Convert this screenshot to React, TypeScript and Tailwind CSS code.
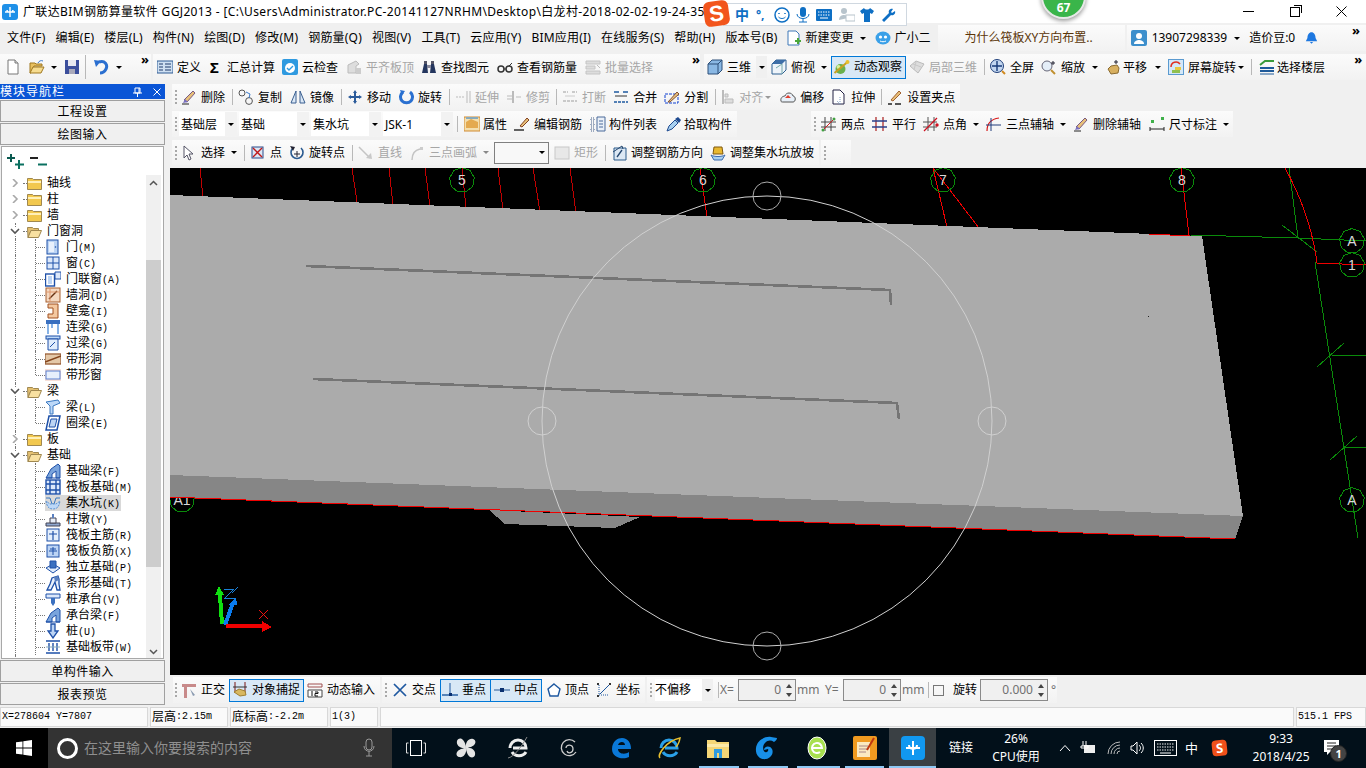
import React from "react";

const S = ({ children, w = 16, h = 16, vb = "0 0 16 16" }: { children: React.ReactNode; w?: number; h?: number; vb?: string }) => (
  <svg width={w} height={h} viewBox={vb} className="shrink-0">{children}</svg>
);

const ic: Record<string, React.ReactNode> = {
  page: <S><path d="M3 1h7l3 3v11H3z" fill="#fff" stroke="#777" /><path d="M10 1v3h3" fill="#ddd" stroke="#777" /></S>,
  open: <S><path d="M1 4h5l1 1h6v2H5L2 14H1z" fill="#e8c060" stroke="#a07820" /><path d="M4 8h11l-3 6H1z" fill="#f6dc90" stroke="#a07820" /><path d="M9 4c1-2 3-3 5-2" fill="none" stroke="#3a78c8" /></S>,
  save: <S><path d="M1 1h14v14H1z" fill="#3c4f9c" /><path d="M4 1h8v6H4z" fill="#e8e8f0" /><path d="M5 10h6v5H5z" fill="#aab" /></S>,
  undo: <S><path d="M6 3c6-2 9 3 7 7s-5 4-6 4" fill="none" stroke="#2a6fd0" strokeWidth="3" /><path d="M1 1l7 1-5 6z" fill="#2a6fd0" /></S>,
  def: <S><path d="M0 2h16v12H0z" fill="#cfe0f2" stroke="#2c5a94" /><path d="M2 5h4M2 8h4M2 11h4M8 5h6M8 8h6M8 11h6" stroke="#1e3a6a" /></S>,
  cloud: <S><rect width="16" height="16" rx="2" fill="#2f9ae0" /><circle cx="8" cy="9" r="5" fill="#fff" /><path d="M5 9l2 2 4-4" stroke="#2f9ae0" strokeWidth="1.4" fill="none" /></S>,
  flat: <S><path d="M2 6l8-4 3 3-3 2v7H2z" fill="#ddd" stroke="#bbb" /><path d="M10 9h5v6h-5z" fill="#ccc" /></S>,
  binoc: <S><path d="M1 14l2-9h3l1 9zM9 14l1-9h3l2 9z" fill="#24365e" /><path d="M3 2h3v3H3zM10 2h3v3h-3z" fill="#556" /><path d="M6 6h4v3H6z" fill="#889" /></S>,
  glasses: <S><circle cx="4" cy="10" r="3" fill="none" stroke="#333" strokeWidth="1.5" /><circle cx="12" cy="10" r="3" fill="none" stroke="#333" strokeWidth="1.5" /><path d="M7 10h2M12 7l3-3" stroke="#333" /></S>,
  batch: <S><path d="M1 2h14v3H1zM1 7h9v3H1zM1 12h14v3H1z" fill="#ddd" stroke="#c4c4c4" /><path d="M12 6l3 3" stroke="#bbb" /></S>,
  cube: <S><path d="M1 5l4-4h10v10l-4 4H1z" fill="#8ab8e4" stroke="#2c4f78" /><path d="M1 5h10v10M11 5l4-4" fill="none" stroke="#2c4f78" /></S>,
  top: <S><path d="M1 5l4-4h10v10l-4 4H1z" fill="#eef4fa" stroke="#2c5f90" /><path d="M1 5l4-4h10l-4 4z" fill="#3e6fa8" /><path d="M11 5v10M5 9l6-4" fill="none" stroke="#7aa" /></S>,
  orbit: <S w={17}><circle cx="7" cy="10" r="5" fill="#6ab04c" /><circle cx="5" cy="8" r="2" fill="#d6ee9c" /><path d="M1 14L14 3" stroke="#c8a020" strokeWidth="2" /><circle cx="14" cy="3" r="2" fill="#e8c030" /></S>,
  local: <S><path d="M1 7l6-5 8 3-6 9z" fill="#ddd" stroke="#bbb" /><path d="M4 5l8 3M7 3l-2 8" stroke="#c8c8c8" /></S>,
  full: <S><circle cx="7" cy="7" r="6.5" fill="#c2d6f0" stroke="#1f3f7a" /><path d="M7 2v10M2 7h10" stroke="#173a78" strokeWidth="1.4" /><path d="M12 12l3 3" stroke="#d08a20" strokeWidth="2" /></S>,
  zoom: <S><circle cx="6" cy="7" r="5" fill="#e4eef8" stroke="#667" /><path d="M10 11l4 4" stroke="#c09030" strokeWidth="2" /><path d="M12 2v4M10 4h4" stroke="#223" /></S>,
  pan: <S><path d="M3 10l3-3 6-1 2 3-1 5-7 1z" fill="#d8b060" stroke="#8a6a30" /><path d="M11 1v4M9 3h4" stroke="#223" /></S>,
  rot: <S><rect x=".5" y=".5" width="15" height="15" fill="#d4e8f8" stroke="#5a9ad0" /><path d="M3 8a5 5 0 0 1 9-3" fill="none" stroke="#e03020" strokeWidth="1.5" /><path d="M4 11h8v3H4z" fill="#90c050" /><path d="M7 8h6v3H7z" fill="#e8c840" /></S>,
  floors: <S><path d="M1 6l5-4h9" fill="none" stroke="#3a9a3a" strokeWidth="2" /><path d="M1 9h14M1 12h14" stroke="#1e5a9a" strokeWidth="2" /><path d="M1 15h14" stroke="#1e5a9a" strokeWidth="1" /></S>,
  newchg: <S><path d="M2 1h8l3 3v11H2z" fill="#fff" stroke="#3f78b8" /><path d="M9 10h2V8h2v2h2v2h-2v2h-2v-2H9z" fill="#4aa83a" /></S>,
  bot: <S><ellipse cx="8" cy="8" rx="7.5" ry="6.5" fill="#3aa0e8" /><circle cx="5.5" cy="7" r="1.6" fill="#fff" /><circle cx="10.5" cy="7" r="1.6" fill="#fff" /><path d="M5 11c2 1 4 1 6 0" stroke="#fff" fill="none" /></S>,
  user: <S><rect width="16" height="16" rx="2" fill="#3d8fcc" /><circle cx="8" cy="6" r="3" fill="#fff" /><path d="M3 14c0-3 3-4 5-4s5 1 5 4z" fill="#fff" /></S>,
  bell: <S w={13}><path d="M8 1c3 0 5 3 5 7l2 4H1l2-4c0-4 2-7 5-7z" fill="#1e78e0" /><path d="M6 13h4l-2 2z" fill="#1e78e0" /></S>,
  brush: <S><path d="M1 15h7" stroke="#222" /><path d="M3 11L12 2l2 2-8 9z" fill="#e8c078" stroke="#7a5a80" /><path d="M2 14l2-4 3 3z" fill="#7a70c0" /></S>,
  copy: <S><circle cx="4" cy="4" r="3" fill="none" stroke="#555" /><circle cx="11" cy="12" r="3.4" fill="none" stroke="#555" /><path d="M8 3l4 2-1 4" fill="none" stroke="#3a78c8" /></S>,
  mirror: <S><path d="M6 2L1 14h5zM10 2l5 12h-5z" fill="#dbe8f6" stroke="#3a5f90" /></S>,
  move: <S><path d="M8 1l2 3H9v3h3V6l3 2-3 2V9H9v3h1l-2 3-2-3h1V9H4v1L1 8l3-2v1h3V4H6z" fill="#2a5a9a" /></S>,
  rotate: <S><path d="M5 3a6 6 0 1 0 7 0" fill="none" stroke="#2a70d0" strokeWidth="3" /><path d="M2 1l5 1-3 4z" fill="#2a70d0" /></S>,
  extend: <S><path d="M1 8h9" stroke="#bbb" strokeDasharray="2 1" /><path d="M12 2v12M15 2v12" stroke="#bbb" /></S>,
  trim: <S><path d="M7 2v12" stroke="#bbb" strokeWidth="2" /><path d="M1 7h5M1 10h5M10 8h5" stroke="#bbb" /></S>,
  brk: <S><path d="M1 3h5M10 3h5M1 12h14" stroke="#bbb" strokeWidth="1.5" strokeDasharray="3 1" /><path d="M3 7h10" stroke="#ccc" /></S>,
  merge: <S><path d="M1 3h5M10 3h5" stroke="#1e5aa0" strokeWidth="1.4" /><path d="M2 7h12" stroke="#333" /><path d="M1 13h14" stroke="#1e5aa0" strokeWidth="1.5" strokeDasharray="3 1" /></S>,
  split: <S><path d="M1 5h13v9H1z" fill="none" stroke="#1040d0" strokeDasharray="3 1" /><path d="M4 13l9-10 2 2-9 8z" fill="#e8c080" stroke="#805030" /></S>,
  align: <S w={13} vb="0 0 13 16"><path d="M2 1v14" stroke="#bbb" strokeWidth="2" /><path d="M4 5h3v3H4zM4 10h8v4H4z" fill="#ddd" stroke="#bbb" /></S>,
  offset: <S><path d="M1 12c-1-4 3-5 4-5 1-4 7-4 8 0 3 0 3 6 0 6H3c-1 0-2 0-2-1z" fill="#e8f0f8" stroke="#555" /><path d="M8 6l3 3H5z" fill="#e04030" /></S>,
  stretch: <S><path d="M2 1h7l4 4v10H2z" fill="#fff" stroke="#224" /><path d="M9 8v7M6 12l3 3" stroke="#7a9ac0" strokeDasharray="1 1" /></S>,
  grip: <S><path d="M1 15h4M8 15h6" stroke="#222" strokeWidth="1.5" /><path d="M4 11l8-9 2 2-8 8z" fill="#e8c078" stroke="#a06030" /></S>,
  attr: <S><path d="M0 1h16v14H0z" fill="#f4dfae" stroke="#d08a30" /><path d="M2 6l5-3 7 3v6H2z" fill="#e4aa50" /><path d="M2 1h12v2H2z" fill="#8ab" /></S>,
  edit: <S><path d="M0 14h10" stroke="#222" strokeWidth="1.4" /><path d="M6 10l7-8 2 2-7 7z" fill="#e8c078" stroke="#804020" /></S>,
  list: <S><path d="M1 2h3v3H1zM1 7h3v3H1zM1 12h3v3H1z" fill="none" stroke="#46608a" strokeDasharray="1 1" /><path d="M7 1h8v14H7z" fill="#eaf0f8" stroke="#4a6a9a" /><path d="M9 5h4M9 8h4M9 11h4" stroke="#4a6a9a" /></S>,
  pick: <S><path d="M1 15l2-5 6-6 3 3-6 6z" fill="#a8d0f0" stroke="#1e4a90" /><path d="M9 3l3-2 3 3-2 3z" fill="#1e4a90" /></S>,
  twopt: <S><path d="M4 1v14M10 1v14M0 6h15M0 11h15" stroke="#444" /><path d="M2 14L14 2" stroke="#d02020" /><circle cx="2" cy="14" r="1.5" fill="#40a040" /><circle cx="13" cy="3" r="1.5" fill="#40a040" /></S>,
  para: <S><path d="M4 1v14M11 1v14" stroke="#b03030" strokeWidth="1.3" /><path d="M0 5h15M0 11h15" stroke="#2a3f8a" strokeWidth="1.3" /></S>,
  angle: <S><path d="M5 1v14M11 1v14M0 6h14M0 11h14" stroke="#555" /><path d="M1 15L14 2" stroke="#d01020" strokeWidth="1.3" /><circle cx="14" cy="9" r="1.7" fill="#d01020" /></S>,
  arc3: <S><path d="M1 15c0-7 4-12 12-13" fill="none" stroke="#d81818" strokeWidth="1.2" /><path d="M5 2v13M0 9h15" stroke="#1e3a7a" /></S>,
  dim: <S><rect x="2" y="4" width="3" height="3" fill="#3fb04a" /><rect x="12" y="1" width="3" height="3" fill="#3fb04a" /><path d="M1 11v4M15 11v4M1 13h14" stroke="#222" /></S>,
  pointer: <S><path d="M3 1l9 8H8l2 5-2 1-2-5-3 3z" fill="#fff" stroke="#556" /></S>,
  pt: <S><rect x="2" y="2" width="11" height="11" fill="#dbe6f4" stroke="#2a4a8a" /><path d="M3 3l9 9M12 3l-9 9" stroke="#c01818" strokeWidth="1.4" /></S>,
  rotpt: <S><path d="M12 3a6 6 0 1 1-8 0" fill="none" stroke="#2a5a90" strokeWidth="1.6" /><path d="M1 1l5 1-2 4z" fill="#223" /><path d="M8 6v6M5 9h6" stroke="#223" /></S>,
  line: <S><path d="M1 2l11 11" stroke="#c4c4c4" strokeWidth="1.5" /><path d="M14 14l-6-1 5-5z" fill="#c8c8c8" /></S>,
  arc: <S><path d="M3 15c0-6 3-10 8-11" fill="none" stroke="#c4c4c4" strokeWidth="1.5" /><rect x="11" y="2" width="3" height="3" fill="#ccc" /></S>,
  rect: <S><rect x="1" y="2" width="14" height="12" fill="#e8e8e8" stroke="#c8c8c8" /></S>,
  adjr: <S><path d="M3 3h12v12H3z" fill="#dce8f4" stroke="#2a5a8a" /><path d="M2 7l9-6 1 3" fill="none" stroke="#24466e" /><path d="M6 12l5-7" stroke="#24466e" strokeWidth="1.3" /></S>,
  adjp: <S><path d="M4 2h8l1 7H3z" fill="#e8b830" stroke="#805a10" /><path d="M1 10c3 2 11 2 14 0l-3 5H4z" fill="#a8d0f0" stroke="#3a6ab0" /></S>,
  ortho: <S><path d="M1 2h14v3H1zM3 5h3v11H3z" fill="#c88a8a" /><path d="M9 7l5 6-2 1z" fill="#8a9ab0" /></S>,
  snap: <S><path d="M3 0v11M13 0v11" stroke="#8a3a3a" strokeWidth="1.2" /><path d="M1 5h14" stroke="#333" /><path d="M2 10l5-3 6 2 1 4-6 1z" fill="#d8b860" stroke="#a08030" /></S>,
  dyn: <S><path d="M1 2h14v3H1z" fill="none" stroke="#a05050" /><path d="M1 8h14v7H1z" fill="#fff" stroke="#444" /><path d="M5 9v5M8 10h3v1.5H8V14h3" stroke="#111" fill="none" /></S>,
  cross: <S><path d="M2 2l12 12M14 2L2 14" stroke="#1e58a0" strokeWidth="1.7" /></S>,
  perp: <S><path d="M0 13h16" stroke="#1e58a0" strokeWidth="1.4" /><path d="M8 1v12" stroke="#1e58a0" /><rect x="7" y="11" width="3" height="3" fill="#0a3070" /></S>,
  mid: <S><path d="M0 8h16" stroke="#5a80b0" strokeWidth="1.4" /><rect x="6" y="6" width="4" height="4" fill="#0a3070" /></S>,
  vertex: <S><path d="M8 2l6 5-2 7H4L2 7z" fill="#fff" stroke="#1e58a0" strokeWidth="1.4" /></S>,
  coord: <S><path d="M3 3v10h10" fill="none" stroke="#1e58a0" strokeDasharray="1 1" /><path d="M4 12L13 3" stroke="#1e58a0" /><path d="M1 1h2v2H1zM13 1h2v2h-2zM1 13h2v2H1z" fill="#333" /></S>,
};

const folder = (open: boolean) => (
  <S w={15} h={13} vb="0 0 15 13">
    {open ? (
      <><path d="M0.5 2.5h5l1 1h5v2H4l-3 7z" fill="#e4c070" stroke="#a08850" /><path d="M4 5.5h10.5l-3 7H1z" fill="#f8e0a0" stroke="#a08850" /></>
    ) : (
      <><path d="M0.5 1.5h5l1 1h8v10H.5z" fill="#f2c84e" stroke="#a08850" /><path d="M1 4h13v2H1z" fill="#fff0b8" /></>
    )}
  </S>
);

const bl = "#1e50a8";
const ti: Record<string, React.ReactNode> = {
  door: <S><rect x="2" y="1" width="11" height="14" fill="#bcd4f4" stroke={bl} /><rect x="4" y="3" width="5" height="10" fill="#e8f0fc" /><circle cx="10.5" cy="8" r=".8" fill={bl} /></S>,
  win: <S><rect x="2" y="2" width="12" height="12" fill="#dce8fa" stroke={bl} /><path d="M8 2v12M2 8h12" stroke={bl} /></S>,
  dw: <S><rect x="0.5" y="3" width="9" height="12" fill="#fff" stroke={bl} strokeWidth="1.4" /><rect x="3" y="5" width="4" height="8" fill="#bcd4f4" /><path d="M10 1h6v7h-6z" fill="#dce8fa" stroke={bl} /></S>,
  hole: <S><rect x="1" y="1" width="14" height="14" fill="#f4d8c0" stroke="#a86030" /><path d="M4 12L12 4" stroke="#663010" strokeWidth="1.5" /><path d="M1 5h14M5 1v14" stroke="#e09a70" /></S>,
  nic: <S><path d="M3 1h10v14H3v-4h5V5H3z" fill="#f4c8a0" stroke="#a05020" /></S>,
  lb: <S><rect x="1" y="1" width="14" height="4" fill="#3a70c0" /><path d="M3 5v10M13 5v10M7 5v4" stroke="#6aa0e0" strokeWidth="1.6" /></S>,
  gl: <S><rect x="1" y="1" width="14" height="3" fill="#bcd8f8" stroke={bl} /><path d="M3 4h10v11H3z" fill="#e0ecfc" stroke={bl} /><path d="M5 12l5-5" stroke={bl} /></S>,
  strip: <S><path d="M0 2h16v12H0z" fill="#f4e0d0" /><path d="M0 3h16v10H0z" fill="#e4c8a8" stroke="#84441c" /><path d="M0 11L16 5" stroke="#84441c" strokeWidth="1.5" /></S>,
  stripw: <S><path d="M0 2h16v12H0z" fill="#f8e0d8" /><rect x="1" y="4" width="14" height="8" fill="#e8f0fc" stroke="#5a80d0" /></S>,
  beam: <S><path d="M1 3l12-2 2 3-7 3v8H5V7z" fill="#bcd8f8" stroke="#3a78c0" /></S>,
  ring: <S><path d="M4 1h11l-3 14H1z" fill="#fff" stroke={bl} strokeWidth="1.5" /><path d="M6 4h6l-2 8H4z" fill="#bcd4f4" stroke={bl} /></S>,
  fb: <S><path d="M1 15l5-9 7-5 2 2v12h-4V8l-4 3v4z" fill="#7aa4dc" stroke={bl} /><path d="M1 15h14" stroke={bl} /></S>,
  raft: <S><rect x="1" y="1" width="14" height="14" fill="#dce8fa" stroke={bl} strokeWidth="1.4" /><path d="M5 1v14M11 1v14M1 5h14M1 11h14" stroke={bl} strokeWidth="1.4" /></S>,
  pit: <S><path d="M1 3h4l2 6h2l2-6h4" fill="none" stroke="#3a78c0" /><path d="M1 6c1 6 3 8 7 8s6-2 7-8l-4 3H5z" fill="#bcd8f8" stroke="#5a90d0" strokeDasharray="2 1" /></S>,
  pier: <S><path d="M1 12h14v3H1z" fill="#90a8d0" stroke="#445" /><path d="M5 7h6v5H5z" fill="#e8eef8" stroke="#445" /><path d="M7 3h2v4H7z" fill="#5a80c0" /></S>,
  rm: <S><rect x="2" y="2" width="12" height="12" fill="#e4effc" stroke={bl} /><path d="M8 4v9M4 7h8" stroke={bl} strokeWidth="1.2" /></S>,
  rn: <S><rect x="2" y="2" width="12" height="12" fill="#bcd4f4" stroke={bl} /><path d="M8 4v8M4 8h8M5 6h6" stroke={bl} /></S>,
  ind: <S><path d="M1 9l7-4 7 4-7 5z" fill="#e0ecfc" stroke={bl} /><path d="M5 2h6v7H5z" fill="#3a70c0" stroke={bl} /></S>,
  str: <S><path d="M2 15l3-6 2-6 6-2 1 3v5l1 6h-3l-2-8-4 8z" fill="#e8f0fc" stroke={bl} strokeWidth="1.3" /><path d="M9 2l4-1 1 4-4 2z" fill="#5a80c0" /></S>,
  cap: <S><path d="M1 3h14v4H1z" fill="#dce8fa" stroke={bl} /><path d="M6 7h4v5l-2 3-2-3z" fill="#3a70c0" /></S>,
  pile: <S><path d="M6 1h4v7h3l-5 7-5-7h3z" fill="#bcd4f4" stroke={bl} strokeWidth="1.3" /></S>,
  band: <S><path d="M1 2h14M1 14h14" stroke={bl} strokeWidth="1.5" /><path d="M4 4v8M8 4v8M12 4v8" stroke={bl} strokeWidth="1.4" /><path d="M1 8h14" stroke="#8ab" /></S>,
};

type Item = [string | null, string, string, boolean?];

const Tool = ({ icon, label, cls = "", dim = false, g = "gap-[4px]", lp = "pt-[1px]" }: { icon: React.ReactNode; label: string; cls?: string; dim?: boolean; g?: string; lp?: string }) => (
  <div className={`flex items-center h-full shrink-0 ${g} ${cls} ${dim ? "text-[#a6a6a6]" : "text-black"}`}>
    {icon}
    <span className={`whitespace-nowrap leading-none ${lp}`}>{label}</span>
  </div>
);

const Arrow = ({ cls = "" }: { cls?: string }) => (
  <span className={`w-0 h-0 shrink-0 border-l-[3px] border-r-[3px] border-t-[3px] border-l-transparent border-r-transparent border-t-black ${cls}`} />
);
const Sep = ({ cls = "" }: { cls?: string }) => <span className={`w-px h-[16px] shrink-0 bg-[#b8b8b8] ${cls}`} />;
const Grip = ({ cls = "" }: { cls?: string }) => (
  <span className={`w-[2px] h-[14px] shrink-0 border-l-2 border-dotted border-[#a8a8a8] ${cls}`} />
);
const More = ({ cls = "" }: { cls?: string }) => (
  <span className={`text-[13px] font-bold leading-none self-start -mt-[1px] shrink-0 text-black ${cls}`}>»</span>
);
const Group = ({ children, cls }: { children: React.ReactNode; cls: string }) => (
  <div className={`flex items-center shrink-0 bg-gradient-to-b from-[#fbfbfb] to-[#f2f2f2] ${cls}`}>{children}</div>
);
const Blue = ({ icon, label, cls }: { icon: React.ReactNode; label: string; cls: string }) => (
  <div className={`flex items-center gap-[4px] border border-[#0078d7] bg-[#d8e8f6] shrink-0 ${cls}`}>
    {icon}
    <span className="whitespace-nowrap leading-none">{label}</span>
  </div>
);

const Combo = ({ label, cls }: { label: string; cls: string }) => (
  <div className={`flex items-stretch h-[24px] shrink-0 bg-white ${cls}`}>
    <span className="flex-1 flex items-center pl-[2px] pt-[1px]">{label}</span>
    <span className="w-[12px] bg-[#f2f2f2] flex items-center justify-center"><Arrow /></span>
  </div>
);

const SpinBox = ({ v, cls }: { v: string; cls: string }) => (
  <div className={`flex items-center justify-end h-[22px] border border-[#8a8a8a] bg-[#f0f0f0] text-[#707070] shrink-0 relative pr-[14px] ${cls}`}>
    {v}
    <span className="absolute right-[3px] top-[4px] w-0 h-0 border-l-[3px] border-r-[3px] border-b-[4px] border-l-transparent border-r-transparent border-b-[#444]" />
    <span className="absolute right-[3px] bottom-[3px] w-0 h-0 border-l-[3px] border-r-[3px] border-t-[4px] border-l-transparent border-r-transparent border-t-[#444]" />
  </div>
);

const menu = ["文件(F)", "编辑(E)", "楼层(L)", "构件(N)", "绘图(D)", "修改(M)", "钢筋量(Q)", "视图(V)", "工具(T)", "云应用(Y)", "BIM应用(I)", "在线服务(S)", "帮助(H)", "版本号(B)"];

const row2: Item[] = [
  ["brush", "删除", "ml-[4px]"], ["|", "", "ml-[7px]"], ["copy", "复制", "ml-[5px]"], ["mirror", "镜像", "ml-[8px]"], ["|", "", "ml-[7px]"],
  ["move", "移动", "ml-[5px]"], ["rotate", "旋转", "ml-[7px]"], ["|", "", "ml-[7px]"], ["extend", "延伸", "ml-[5px]", true], ["trim", "修剪", "ml-[7px]", true], ["|", "", "ml-[6px]"],
  ["brk", "打断", "ml-[5px]", true], ["merge", "合并", "ml-[7px]"], ["split", "分割", "ml-[7px]"], ["|", "", "ml-[7px]"],
];

const tree: { k: string; t: string; s?: string; ic?: string; o?: boolean; last?: boolean; sel?: boolean }[] = [
  { k: "f", t: "轴线" }, { k: "f", t: "柱" }, { k: "f", t: "墙" }, { k: "f", t: "门窗洞", o: true },
  { k: "c", t: "门", s: "(M)", ic: "door" }, { k: "c", t: "窗", s: "(C)", ic: "win" }, { k: "c", t: "门联窗", s: "(A)", ic: "dw" }, { k: "c", t: "墙洞", s: "(D)", ic: "hole" },
  { k: "c", t: "壁龛", s: "(I)", ic: "nic" }, { k: "c", t: "连梁", s: "(G)", ic: "lb" }, { k: "c", t: "过梁", s: "(G)", ic: "gl" }, { k: "c", t: "带形洞", ic: "strip" }, { k: "c", t: "带形窗", ic: "stripw", last: true },
  { k: "f", t: "梁", o: true }, { k: "c", t: "梁", s: "(L)", ic: "beam" }, { k: "c", t: "圈梁", s: "(E)", ic: "ring", last: true },
  { k: "f", t: "板" }, { k: "f", t: "基础", o: true },
  { k: "c", t: "基础梁", s: "(F)", ic: "fb" }, { k: "c", t: "筏板基础", s: "(M)", ic: "raft" }, { k: "c", t: "集水坑", s: "(K)", ic: "pit", sel: true }, { k: "c", t: "柱墩", s: "(Y)", ic: "pier" },
  { k: "c", t: "筏板主筋", s: "(R)", ic: "rm" }, { k: "c", t: "筏板负筋", s: "(X)", ic: "rn" }, { k: "c", t: "独立基础", s: "(P)", ic: "ind" }, { k: "c", t: "条形基础", s: "(T)", ic: "str" },
  { k: "c", t: "桩承台", s: "(V)", ic: "cap" }, { k: "c", t: "承台梁", s: "(F)", ic: "fb" }, { k: "c", t: "桩", s: "(U)", ic: "pile" }, { k: "c", t: "基础板带", s: "(W)", ic: "band" },
  { k: "f", t: "" },
];

const NavBtn = ({ t, cls = "" }: { t: string; cls?: string }) => (
  <div className={`h-[22px] shrink-0 flex items-center justify-center border border-[#a0a0a0] bg-[#f0f0f0] tracking-[0.5px] pt-[2px] leading-none ${cls}`}>{t}</div>
);

const mono = "font-['Liberation_Mono',monospace] text-[10px]";

const TreeRow = ({ r, i }: { r: (typeof tree)[number]; i: number }) => {
  const afterRoot = i >= 3;
  if (r.k === "f") {
    return (
      <div className="h-[16px] relative flex items-center shrink-0">
        {afterRoot && <span className="absolute left-[13px] top-0 h-full border-l border-dotted border-[#777]" />}
        <span className="absolute left-[8px] top-[4px] bg-white w-[10px] h-[8px] flex items-center justify-center">
          <svg width="10" height="8" viewBox="0 0 10 8">
            {r.o ? <path d="M1 2l4 4 4-4" fill="none" stroke="#555" strokeWidth="1.6" /> : <path d="M3 0l4 4-4 4" fill="none" stroke="#a8a8a8" strokeWidth="1.6" />}
          </svg>
        </span>
        <span className="ml-[21px] w-[4px] border-b border-dotted border-[#777]" />
        {folder(!!r.o)}
        <span className="ml-[5px] leading-none whitespace-nowrap">{r.t}</span>
      </div>
    );
  }
  return (
    <div className="h-[16px] relative flex items-center shrink-0">
      <span className="absolute left-[13px] top-0 h-full border-l border-dotted border-[#777]" />
      <span className={`absolute left-[33px] top-0 border-l border-dotted border-[#777] ${r.last ? "h-[8px]" : "h-full"}`} />
      <span className="ml-[34px] w-[9px] border-b border-dotted border-[#777]" />
      <div className={`flex items-center h-[16px] ${r.sel ? "bg-[#d9d9d9] pr-[1px]" : ""}`}>
        {ti[r.ic!]}
        <span className="ml-[5px] leading-none whitespace-nowrap">
          {r.t}
          {r.s && <span className={mono}>{r.s}</span>}
        </span>
      </div>
    </div>
  );
};

const Axis = ({ x, y, t }: { x: number; y: number; t: string }) => {
  const pts = Array.from({ length: 9 }, (_, i) => {
    const a = (i * 2 * Math.PI) / 9 - Math.PI / 2;
    return `${(x + 12.5 * Math.cos(a)).toFixed(1)},${(y + 12.5 * Math.sin(a)).toFixed(1)}`;
  }).join(" ");
  return (
    <g>
      <polygon points={pts} fill="none" stroke="#0a8a0a" />
      <text x={x} y={y + 5} textAnchor="middle" fontSize="14" fontFamily="'Liberation Sans',sans-serif" fill="#d8d8d8">{t}</text>
    </g>
  );
};

const reds: [number, number, number, number][] = [
  [200, 168, 203, 197], [352, 168, 357, 202], [389, 168, 393, 205], [425, 168, 430, 206], [462, 168, 466, 208],
  [498, 168, 503, 210], [533, 168, 540, 212], [570, 168, 576, 213], [700, 168, 707, 217], [933, 168, 947, 227], [933, 168, 979, 228], [1181, 168, 1189, 235],
];

const Scene = () => (
  <svg className="block w-full h-full" viewBox="170 168 1196 507" shapeRendering="crispEdges">
    <Axis x={182} y={500} t="A1" />
    <polygon points="489,510 505,524 615,528 640,517" fill="#868686" />
    {reds.map((r, i) => <line key={i} x1={r[0]} y1={r[1]} x2={r[2]} y2={r[3]} stroke={i > 7 ? "#f00000" : "#c00000"} />)}
    <polygon points="170,475 1243,516 1235,539 170,497" fill="#868686" />
    <polygon points="170,195 1202,236 1243,516 170,475" fill="#ababab" />
    <polyline points="170,497 1235,539" fill="none" stroke="#f00000" strokeWidth="1" />
    <line x1="1149" y1="234.5" x2="1190" y2="235.5" stroke="#f00000" />
    <polyline points="306,266 890,290 891,305" fill="none" stroke="#757575" strokeWidth="2.6" />
    <polyline points="313,379 897,403 899,419" fill="none" stroke="#757575" strokeWidth="2.6" />
    <rect x="1148" y="316" width="1" height="1" fill="#222" />
    <g fill="none" stroke="#d0d0d0" shapeRendering="auto">
      <circle cx="767" cy="421" r="225" />
      <circle cx="767" cy="196" r="14" stroke="#aaa" />
      <circle cx="542" cy="421" r="14" />
      <circle cx="992" cy="421" r="14" />
      <circle cx="767" cy="646" r="14" stroke="#aaa" />
    </g>
    <Axis x={462} y={180} t="5" />
    <Axis x={703} y={180} t="6" />
    <Axis x={943} y={180} t="7" />
    <Axis x={1182} y={180} t="8" />
    <g fill="none" stroke="#0a8a0a">
      <path d="M1190 235L1298 238L1366 241" />
      <path d="M1289 168L1298 238" />
      <path d="M1282 225L1317 252" />
      <path d="M1315 262L1358 538" />
      <path d="M1317 367L1344 343M1331 355L1366 356" />
      <path d="M1330 460L1357 436M1345 447L1366 448" />
    </g>
    <path d="M1285 168C1300 195 1312 225 1317 263L1366 265" fill="none" stroke="#f00000" />
    <Axis x={1352} y={241} t="A" />
    <Axis x={1352} y={265} t="1" />
    <Axis x={1352} y={500} t="A" />
    <g>
      <line x1="222" y1="624" x2="220" y2="595" stroke="#10e010" strokeWidth="4" />
      <polygon points="215,595 224,595 219,586" fill="#10e010" />
      <line x1="225" y1="625" x2="233" y2="603" stroke="#0a7cf0" strokeWidth="4" />
      <polygon points="229,605 237,605 236,597" fill="#0a7cf0" />
      <line x1="226" y1="625.5" x2="262" y2="626.5" stroke="#f00000" strokeWidth="4" />
      <polygon points="262,621 272,627 262,632" fill="#f00000" />
      <path d="M259 610l9 9M268 610l-9 9" stroke="#f01010" />
      <path d="M224 589h10l-9 9h10M232 593l6-6" fill="none" stroke="#1a80d8" />
    </g>
  </svg>
);

export default function App() {
  return (
    <div className="relative w-[1366px] h-[768px] overflow-hidden bg-[#f0f0f0] text-[12px] text-black font-['Noto_Sans','Noto_Sans_CJK_SC',sans-serif] flex flex-col">
      {/* title */}
      <div className="h-[23px] bg-white flex items-center shrink-0 pl-[2px]">
        <svg width="16" height="16" viewBox="0 0 16 16" className="shrink-0">
          <rect width="16" height="16" rx="3" fill="#1e90e8" />
          <path d="M8 3v10M3 8h10M5 6c0 3 6 3 6 0" stroke="#fff" strokeWidth="1.4" fill="none" />
        </svg>
        <span className="ml-[5px] whitespace-nowrap text-[12px] tracking-[0.36px]">广联达BIM钢筋算量软件 GGJ2013 - [C:\Users\Administrator.PC-20141127NRHM\Desktop\白龙村-2018-02-02-19-24-35</span>
        <div className="ml-auto flex items-center">
          <span className="w-[11px] h-px bg-black" />
          <span className="ml-[36px] relative w-[10px] h-[10px] border border-black bg-white">
            <span className="absolute -right-[3px] -top-[3px] w-[8px] h-[8px] border-t border-r border-black" />
          </span>
          <svg className="ml-[36px] mr-[19px]" width="11" height="11" viewBox="0 0 11 11"><path d="M.5.5l10 10M10.5.5l-10 10" stroke="#000" /></svg>
        </div>
      </div>

      {/* menu */}
      <div className="h-[30px] flex items-center shrink-0 pl-[7px]">
        <div className="flex items-center gap-[10px] shrink-0 tracking-[0.2px]">
          {menu.map((m) => <span key={m} className="whitespace-nowrap leading-none">{m}</span>)}
        </div>
        <Tool icon={ic.newchg} label="新建变更" cls="ml-[8px]" lp="" />
        <Arrow cls="ml-[6px]" />
        <Tool icon={ic.bot} label="广小二" cls="ml-[9px]" lp="" />
        <div className="ml-[7px] w-[187px] h-[26px] flex items-center justify-center bg-gradient-to-b from-[#fbfbfb] to-[#f2f2f2] text-[#5a3508] leading-none whitespace-nowrap pr-[5px]">为什么筏板XY方向布置..</div>
        <div className="ml-[2px] h-[26px] flex-1 flex items-center bg-gradient-to-b from-[#fbfbfb] to-[#f2f2f2] pl-[4px]">
          {ic.user}
          <span className="ml-[5px] leading-none">13907298339</span>
          <Arrow cls="ml-[7px]" />
          <span className="ml-[9px] leading-none">造价豆:0</span>
          <span className="ml-[10px]">{ic.bell}</span>
          <More cls="ml-auto mr-[6px]" />
        </div>
      </div>

      {/* toolbar 1 */}
      <div className="h-[26px] mt-[1px] flex items-stretch shrink-0">
        <Group cls="w-[151px] pl-[5px]">
          {ic.page}
          <span className="ml-[8px]">{ic.open}</span>
          <Arrow cls="ml-[6px]" />
          <span className="ml-[7px]">{ic.save}</span>
          <Sep cls="ml-[5px] h-[24px]" />
          <span className="ml-[7px]">{ic.undo}</span>
          <Arrow cls="ml-[7px]" />
          <More cls="ml-[19px]" />
        </Group>
        <Group cls="ml-[2px] w-[547px] pl-[4px]">
          <Tool icon={ic.def} label="定义" />
          <span className="ml-[9px] w-[11px] text-[15px] font-bold leading-none">Σ</span>
          <span className="ml-[8px] leading-none whitespace-nowrap pt-[1px]">汇总计算</span>
          <Tool icon={ic.cloud} label="云检查" cls="ml-[7px]" />
          <Tool icon={ic.flat} label="平齐板顶" cls="ml-[8px]" dim />
          <Tool icon={ic.binoc} label="查找图元" cls="ml-[7px]" />
          <Tool icon={ic.glasses} label="查看钢筋量" cls="ml-[8px]" />
          <Tool icon={ic.batch} label="批量选择" cls="ml-[8px]" dim />
          <More cls="ml-[39px]" />
        </Group>
        <Group cls="ml-[4px] flex-1 pl-[3px]">
          <Tool icon={ic.cube} label="三维" />
          <span className="ml-[5px] w-[11px] h-[22px] bg-[#f0f0f0] flex items-center justify-center"><Arrow /></span>
          <Tool icon={ic.top} label="俯视" cls="ml-[4px]" />
          <Arrow cls="ml-[6px]" />
          <Blue icon={ic.orbit} label="动态观察" cls="ml-[4px] w-[75px] h-[23px] pl-[1px]" />
          <Tool icon={ic.local} label="局部三维" cls="ml-[3px]" dim />
          <Sep cls="ml-[7px]" />
          <Tool icon={ic.full} label="全屏" cls="ml-[5px]" />
          <Tool icon={ic.zoom} label="缩放" cls="ml-[7px]" />
          <Arrow cls="ml-[7px]" />
          <Tool icon={ic.pan} label="平移" cls="ml-[7px]" g="gap-[2px]" />
          <Arrow cls="ml-[8px]" />
          <Tool icon={ic.rot} label="屏幕旋转" cls="ml-[7px]" />
          <Arrow cls="ml-[2px]" />
          <Sep cls="ml-[7px]" />
          <Tool icon={ic.floors} label="选择楼层" cls="ml-[7px]" g="gap-[2px]" />
          <More cls="ml-[29px]" />
        </Group>
      </div>

      {/* body */}
      <div className="h-[621px] mt-[4px] flex shrink-0">
        {/* nav */}
        <div className="w-[165px] flex flex-col shrink-0">
          <div className="h-[15px] bg-[#0a55d6] text-white flex items-center shrink-0 tracking-[1px] leading-none">
            <span className="whitespace-nowrap">模块导航栏</span>
            <svg className="ml-auto" width="9" height="10" viewBox="0 0 9 10"><path d="M2 1h5v5H2zM0 6h9M4.5 6v4M6 1v5" fill="none" stroke="#fff" /></svg>
            <svg className="ml-[11px] mr-[4px]" width="8" height="8" viewBox="0 0 8 8"><path d="M.5.5l7 7M7.5.5l-7 7" stroke="#fff" /></svg>
          </div>
          <NavBtn t="工程设置" cls="mt-[1px]" />
          <NavBtn t="绘图输入" cls="mt-[1px]" />
          <div className="mt-[1px] h-[513px] border border-[#a8a8a8] mx-[1px] bg-white flex flex-col overflow-hidden relative">
            <div className="h-[28px] shrink-0 flex items-center pl-[5px] gap-[6px]">
              <svg width="17" height="15" viewBox="0 0 17 15"><path d="M4 0v8M0 4h8" stroke="#0a5a50" strokeWidth="2" /><path d="M12 6v9M8 10.5h9" stroke="#0a7060" strokeWidth="2" /></svg>
              <svg width="17" height="15" viewBox="0 0 17 15"><path d="M0 4h8" stroke="#222" strokeWidth="2" /><path d="M8 10.5h9" stroke="#0a7060" strokeWidth="2" /></svg>
            </div>
            <div className="flex flex-1 min-h-0">
              <div className="flex-1 min-w-0 overflow-hidden flex flex-col">
                {tree.map((r, i) => <TreeRow key={i} r={r} i={i} />)}
              </div>
              <div className="w-[15px] mr-[2px] shrink-0 bg-[#f0f0f0] flex flex-col items-center">
                <svg className="mt-[5px] shrink-0" width="9" height="6" viewBox="0 0 9 6"><path d="M1 5l3.5-3.5L8 5" fill="none" stroke="#555" strokeWidth="1.5" /></svg>
                <div className="mt-[74px] w-full h-[307px] bg-[#cdcdcd] shrink-0" />
                <svg className="mt-auto mb-[3px] shrink-0" width="9" height="6" viewBox="0 0 9 6"><path d="M1 1l3.5 3.5L8 1" fill="none" stroke="#555" strokeWidth="1.5" /></svg>
              </div>
            </div>
          </div>
          <NavBtn t="单构件输入" cls="mt-[1px]" />
          <NavBtn t="报表预览" cls="mt-[1px]" />
        </div>

        {/* main */}
        <div className="ml-[5px] w-[1196px] flex flex-col shrink-0">
          <div className="h-[26px] flex shrink-0">
            <Group cls="ml-[2px] w-[788px] pl-[3px]">
              <Grip />
              {row2.map((r, i) =>
                r[0] === "|" ? <Sep key={i} cls={r[2]} /> : <Tool key={i} icon={ic[r[0]!]} label={r[1]} cls={r[2]} dim={r[3]} />
              )}
              <Tool icon={ic.align} label="对齐" cls="ml-[5px]" dim g="gap-[5px]" />
              <Arrow cls="ml-[2px] !border-t-[#999]" />
              <Tool icon={ic.offset} label="偏移" cls="ml-[9px]" />
              <Tool icon={ic.stretch} label="拉伸" cls="ml-[7px]" />
              <Sep cls="ml-[6px]" />
              <Tool icon={ic.grip} label="设置夹点" cls="ml-[5px]" />
            </Group>
          </div>
          <div className="h-[26px] mt-[1px] flex shrink-0">
            <Group cls="ml-[2px] w-[565px] pl-[3px]">
              <Grip />
              <Combo label="基础层" cls="ml-[2px] w-[58px]" />
              <Combo label="基础" cls="ml-[2px] w-[70px]" />
              <Combo label="集水坑" cls="ml-[2px] w-[70px]" />
              <Combo label="JSK-1" cls="ml-[2px] w-[70px]" />
              <Sep cls="ml-[4px]" />
              <Tool icon={ic.attr} label="属性" cls="ml-[6px]" g="gap-[3px]" />
              <Tool icon={ic.edit} label="编辑钢筋" cls="ml-[7px]" />
              <Tool icon={ic.list} label="构件列表" cls="ml-[8px]" g="gap-[3px]" />
              <Tool icon={ic.pick} label="拾取构件" cls="ml-[9px]" g="gap-[2px]" />
            </Group>
            <Group cls="ml-[74px] w-[422px] pl-[3px]">
              <Grip />
              <Tool icon={ic.twopt} label="两点" cls="ml-[5px]" />
              <Tool icon={ic.para} label="平行" cls="ml-[7px]" />
              <Tool icon={ic.angle} label="点角" cls="ml-[7px]" />
              <Arrow cls="ml-[6px]" />
              <Tool icon={ic.arc3} label="三点辅轴" cls="ml-[7px]" />
              <Arrow cls="ml-[6px]" />
              <Tool icon={ic.brush} label="删除辅轴" cls="ml-[7px]" />
              <Tool icon={ic.dim} label="尺寸标注" cls="ml-[8px]" />
              <Arrow cls="ml-[6px]" />
            </Group>
          </div>
          <div className="h-[25px] mt-[3px] flex shrink-0">
            <Group cls="ml-[2px] w-[647px] pl-[3px]">
              <Grip />
              <Tool icon={ic.pointer} label="选择" cls="ml-[4px]" />
              <Arrow cls="ml-[6px]" />
              <Sep cls="ml-[7px]" />
              <Tool icon={ic.pt} label="点" cls="ml-[5px]" />
              <Tool icon={ic.rotpt} label="旋转点" cls="ml-[7px]" />
              <Sep cls="ml-[7px]" />
              <Tool icon={ic.line} label="直线" cls="ml-[5px]" dim />
              <Tool icon={ic.arc} label="三点画弧" cls="ml-[7px]" dim />
              <Arrow cls="ml-[6px] !border-t-[#888]" />
              <div className="ml-[5px] w-[55px] h-[22px] border border-[#808080] bg-[#f8f8f8] flex items-center justify-end pr-[3px] shrink-0"><Arrow /></div>
              <Tool icon={ic.rect} label="矩形" cls="ml-[5px]" dim />
              <Sep cls="ml-[7px]" />
              <Tool icon={ic.adjr} label="调整钢筋方向" cls="ml-[5px]" />
              <Tool icon={ic.adjp} label="调整集水坑放坡" cls="ml-[7px]" />
            </Group>
            <Group cls="ml-[2px] w-[30px] pl-[3px]"><Grip /></Group>
          </div>
          <div className="h-[3px] shrink-0" />
          {/* canvas */}
          <div className="h-[507px] bg-black shrink-0 overflow-hidden"><Scene /></div>
          {/* bottom */}
          <div className="h-[30px] flex items-center shrink-0 pl-[3px]">
            <Group cls="h-[26px] w-[207px] pl-[2px]">
              <Grip />
              <Tool icon={ic.ortho} label="正交" cls="ml-[4px]" lp="" />
              <Blue icon={ic.snap} label="对象捕捉" cls="ml-[4px] w-[75px] h-[23px] pl-[2px]" />
              <Tool icon={ic.dyn} label="动态输入" cls="ml-[3px]" lp="" />
            </Group>
            <Group cls="ml-[2px] h-[26px] w-[263px] pl-[3px]">
              <Grip />
              <Tool icon={ic.cross} label="交点" cls="ml-[5px]" lp="" />
              <Blue icon={ic.perp} label="垂点" cls="ml-[4px] w-[51px] h-[23px] pl-[1px]" />
              <Blue icon={ic.mid} label="中点" cls="w-[51px] h-[23px] pl-[3px] border-l-0" />
              <Tool icon={ic.vertex} label="顶点" cls="ml-[4px]" g="gap-[3px]" lp="" />
              <Tool icon={ic.coord} label="坐标" cls="ml-[7px]" lp="" />
            </Group>
            <Group cls="ml-[2px] h-[26px] w-[410px] pl-[3px]">
              <Grip />
              <div className="ml-[3px] w-[58px] h-[22px] bg-white flex items-stretch shrink-0">
                <span className="flex-1 flex items-center">不偏移</span>
                <span className="w-[11px] bg-[#f0f0f0] flex items-center justify-center"><Arrow /></span>
              </div>
              <Sep cls="ml-[5px]" />
              <span className="ml-[1px] w-[18px] text-[#707070]">X=</span>
              <SpinBox v="0" cls="w-[58px]" />
              <span className="ml-[1px] w-[28px] text-[#707070]">mm</span>
              <span className="w-[18px] text-[#707070]">Y=</span>
              <SpinBox v="0" cls="w-[58px]" />
              <span className="ml-[1px] w-[23px] text-[#707070]">mm</span>
              <Sep cls="ml-[3px]" />
              <span className="ml-[4px] w-[11px] h-[11px] border border-[#777] shrink-0" />
              <span className="ml-[9px] w-[27px] text-black leading-none">旋转</span>
              <SpinBox v="0.000" cls="w-[68px]" />
              <span className="ml-[3px] text-[#707070]">°</span>
            </Group>
          </div>
        </div>
      </div>

      {/* status */}
      <div className="h-[20px] mt-[2px] flex gap-[2px] shrink-0">
        <div className="w-[148px] bg-[#fafafa] border border-[#d8d8d8] flex items-center pl-[1px] whitespace-nowrap leading-none"><span className={mono}>X=278604 Y=7807</span></div>
        <div className="w-[78px] bg-[#fafafa] border border-[#d8d8d8] flex items-center pl-[1px] whitespace-nowrap leading-none">层高<span className={mono}>:2.15m</span></div>
        <div className="w-[98px] bg-[#fafafa] border border-[#d8d8d8] flex items-center pl-[1px] whitespace-nowrap leading-none">底标高<span className={mono}>:-2.2m</span></div>
        <div className="w-[48px] bg-[#fafafa] border border-[#d8d8d8] flex items-center pl-[1px] whitespace-nowrap leading-none"><span className={mono}>1(3)</span></div>
        <div className="flex-1 bg-[#fafafa] border border-[#d8d8d8]" />
        <div className="w-[70px] bg-[#fafafa] border border-[#d8d8d8] flex items-center pl-[1px] whitespace-nowrap leading-none"><span className={mono}>515.1 FPS</span></div>
      </div>
      <div className="h-[1px] shrink-0" />

      {/* taskbar */}
      <div className="h-[40px] bg-[#02101a] flex items-center shrink-0 text-white relative">
        <div className="w-[48px] h-full bg-black flex items-center justify-center shrink-0">
          <svg width="16" height="16" viewBox="0 0 16 16"><path d="M0 2.3l6.5-.9v6.2H0zM7.3 1.3L16 0v7.6H7.3zM0 8.4h6.5v6.2L0 13.7zM7.3 8.4H16V16l-8.7-1.2z" fill="#fff" /></svg>
        </div>
        <div className="w-[344px] h-full bg-[#333333] flex items-center shrink-0 pl-[9px] text-[14px] text-[#8f8f8f]">
          <span className="w-[21px] h-[21px] rounded-full border-[3px] border-white shrink-0" />
          <span className="ml-[6px] whitespace-nowrap leading-none">在这里输入你要搜索的内容</span>
          <svg className="ml-[111px]" width="12" height="20" viewBox="0 0 12 20"><rect x="3" y="1" width="6" height="11" rx="3" fill="none" stroke="#999" /><path d="M1 8c0 7 10 7 10 0M6 13v5M3 18h6" fill="none" stroke="#999" /></svg>
        </div>
        <svg className="ml-[14px]" width="20" height="16" viewBox="0 0 20 16"><rect x="4.5" y=".5" width="11" height="15" fill="none" stroke="#fff" /><path d="M2.5 3H.5v10h2M17.5 3h2v10h-2" fill="none" stroke="#ddd" /></svg>
        <svg className="ml-[29px]" width="22" height="22" viewBox="0 0 22 22"><path d="M11 11C5 12 1 8 2 4s8-4 9 7zM11 11c6-1 10 3 9 7s-8 4-9-7zM11 11C10 5 14 1 18 2s4 8-7 9zM11 11c1 6-3 10-7 9s-4-8 7-9z" fill="#e4e4e4" /></svg>
        <svg className="ml-[30px]" width="22" height="24" viewBox="0 0 22 24"><path d="M3 12a8 8 0 0 1 16 0H6M19 16c-3 5-11 5-14 0" fill="none" stroke="#eee" strokeWidth="3" /><path d="M1 22c6-1 14-12 19-21" fill="none" stroke="#888" /></svg>
        <svg className="ml-[30px]" width="20" height="20" viewBox="0 0 20 20"><path d="M16 4a8 8 0 1 0 1 10M7 10c0-4 7-4 7 1 0 4-5 5-6 2" fill="none" stroke="#ccc" strokeWidth="1.3" /></svg>
        <svg className="ml-[31px]" width="22" height="22" viewBox="0 0 22 22"><path d="M2 12C2 4 8 1 12 1c6 0 9 5 9 11H8c0 5 7 6 11 3v5c-6 3-17 1-17-8zM8 8h7c0-4-6-4-7 0z" fill="#0a78d8" /></svg>
        <svg className="ml-[25px]" width="24" height="24" viewBox="0 0 24 24"><path d="M4 12a8 8 0 0 1 16 0H8M20 16c-3 5-11 5-14 0" fill="none" stroke="#2aa0e8" strokeWidth="3" /><path d="M3 22c-3-3 6-17 20-20 0 0-1 6-4 9" fill="none" stroke="#e8c030" strokeWidth="1.5" /></svg>
        <svg className="ml-[26px]" width="22" height="20" viewBox="0 0 22 20"><path d="M0 2h8l2 2h12v16H0z" fill="#f4d676" /><path d="M0 6h22v3H0z" fill="#fbe9a8" /><path d="M7 11h8v9h-3v-5h-2v5H7z" fill="#2e9be0" /></svg>
        <svg className="ml-[24px]" width="24" height="26" viewBox="0 0 24 26"><path d="M18 2c-6-1-14 3-15 11s5 12 10 11 8-6 6-10-8-3-8 1l4-1c1 2-1 4-3 3s-3-6 0-9 6-3 9-1c2-1 3-3 3-4z" fill="#1890e8" /></svg>
        <svg className="ml-[29px]" width="22" height="24" viewBox="0 0 22 24"><ellipse cx="11" cy="12" rx="9" ry="11" fill="#a8e050" stroke="#fff" /><path d="M6 12h10a5 5 0 1 0-2 4" fill="none" stroke="#fff" strokeWidth="2" /></svg>
        <svg className="ml-[25px]" width="24" height="24" viewBox="0 0 24 24"><rect width="24" height="24" rx="2" fill="#f09a20" /><rect x="4" y="6" width="13" height="15" fill="#fbe9c0" /><path d="M6 10h9M6 13h9M6 16h7" stroke="#a88" /><path d="M14 14l7-12" stroke="#c03810" strokeWidth="2" /></svg>
        <div className="ml-[12px] w-[47px] h-full bg-[#3a4044] flex items-center justify-center shrink-0">
          <svg width="24" height="24" viewBox="0 0 24 24"><rect width="24" height="24" rx="4" fill="#1198f0" /><path d="M12 5v14M5 12h14M8 9c0 5 8 5 8 0" stroke="#fff" strokeWidth="2" fill="none" /></svg>
        </div>
        <span className="ml-[13px] leading-none whitespace-nowrap">链接</span>
        <div className="ml-[15px] w-[56px] flex flex-col items-center leading-[18px] whitespace-nowrap">
          <span>26%</span>
          <span>CPU使用</span>
        </div>
        <svg className="ml-[15px]" width="12" height="8" viewBox="0 0 12 8"><path d="M1 7l5-5.5L11 7" fill="none" stroke="#fff" /></svg>
        <svg className="ml-[9px]" width="16" height="14" viewBox="0 0 16 14"><rect x="4" y="4" width="11" height="8" fill="#eee" /><path d="M3 0v5M6 0v5M1 5h7v2H1z" stroke="#fff" fill="none" /></svg>
        <svg className="ml-[11px]" width="14" height="14" viewBox="0 0 14 14"><path d="M1 13A12 12 0 0 1 13 1M4 13A9 9 0 0 1 13 4M7 13a6 6 0 0 1 6-6M10 13a3 3 0 0 1 3-3" fill="none" stroke="#bbb" /></svg>
        <svg className="ml-[9px]" width="14" height="14" viewBox="0 0 14 14"><path d="M1 5h2l4-4v12l-4-4H1zM9 4c2 2 2 4 0 6M11 2c3 3 3 7 0 10" fill="none" stroke="#fff" /></svg>
        <svg className="ml-[10px]" width="23" height="16" viewBox="0 0 23 16"><rect x=".5" y=".5" width="22" height="15" fill="none" stroke="#fff" /><path d="M3 4h17M3 7h17M3 10h17" stroke="#eee" strokeDasharray="1.5 1" /><path d="M6 13h11" stroke="#fff" /></svg>
        <span className="ml-[8px] leading-none text-[13px]">中</span>
        <span className="ml-[14px] w-[15px] h-[16px] rounded-[4px] bg-[#f0501a] flex items-center justify-center text-[13px] font-bold leading-none text-white -rotate-6">S</span>
        <div className="ml-[23px] w-[62px] flex flex-col items-center leading-[18px] whitespace-nowrap">
          <span>9:33</span>
          <span>2018/4/25</span>
        </div>
        <div className="ml-[12px] relative">
          <svg width="16" height="16" viewBox="0 0 16 16"><path d="M0 0h15v12H6l-3 3v-3H0z" fill="#fff" /><path d="M3 3h9M3 6h9M3 9h9" stroke="#222" /></svg>
          <span className="absolute left-[6px] top-[5px] w-[17px] h-[17px] rounded-full bg-[#444] flex items-center justify-center text-[11px] font-bold leading-none border border-[#222]">1</span>
        </div>
        <span className="absolute left-[699px] bottom-0 w-[40px] h-[2px] bg-[#8ec8f4]" />
        <span className="absolute left-[748px] bottom-0 w-[40px] h-[2px] bg-[#8ec8f4]" />
        <span className="absolute left-[797px] bottom-0 w-[43px] h-[2px] bg-[#8ec8f4]" />
        <span className="absolute left-[845px] bottom-0 w-[39px] h-[2px] bg-[#8ec8f4]" />
        <span className="absolute left-[889px] bottom-0 w-[47px] h-[2px] bg-[#8ec8f4]" />
      </div>

      {/* IME bar overlay */}
      <div className="absolute left-[723px] top-[3px] w-[184px] h-[23px] bg-white border border-[#d0d8e0] flex items-center text-[#0e6fc4]">
        <span className="ml-[11px] text-[14px] font-bold leading-none">中</span>
        <span className="ml-[7px] text-[12px] font-bold leading-none">°,</span>
        <svg className="ml-[9px]" width="16" height="16" viewBox="0 0 16 16"><circle cx="8" cy="8" r="7" fill="none" stroke="#0e6fc4" strokeWidth="1.5" /><path d="M5 6v1M11 6v1" stroke="#0e6fc4" strokeWidth="1.5" /><path d="M4.5 10c2 2 5 2 7 0" stroke="#0e6fc4" fill="none" /></svg>
        <svg className="ml-[6px]" width="14" height="16" viewBox="0 0 14 16"><rect x="4" y="0" width="6" height="10" rx="3" fill="#0e6fc4" /><path d="M1 7c0 6 12 6 12 0M7 12v3M3 15h8" fill="none" stroke="#0e6fc4" /></svg>
        <svg className="ml-[6px]" width="16" height="12" viewBox="0 0 16 12"><rect width="16" height="12" rx="1" fill="#0e6fc4" /><path d="M2 3h12M2 6h12" stroke="#fff" strokeDasharray="1.5 1" /><path d="M4 9h8" stroke="#fff" /></svg>
        <svg className="ml-[7px]" width="16" height="15" viewBox="0 0 16 15"><circle cx="5" cy="4" r="3" fill="#b8c4cc" /><path d="M0 13c0-4 3-5 5-5s4 1 4 3" fill="#b8c4cc" /><rect x="7" y="8" width="9" height="6" fill="#fff" stroke="#b8c4cc" /></svg>
        <svg className="ml-[5px]" width="14" height="14" viewBox="0 0 14 14"><path d="M4 0L0 3l2 3 2-1v9h6V5l2 1 2-3-4-3c-1 2-5 2-6 0z" fill="#0e6fc4" /></svg>
        <svg className="ml-[8px]" width="14" height="14" viewBox="0 0 14 14"><path d="M13 3l-3 2-1-1 2-3c-3-1-5 2-4 4L0 12l2 2 7-7c2 1 5-1 4-4z" fill="#0e6fc4" /></svg>
      </div>
      <div className="absolute left-[704px] top-[1px] w-[25px] h-[25px] rounded-[6px] bg-[#f2551c] rotate-[-8deg] flex items-center justify-center text-white text-[22px] font-bold leading-none font-['Liberation_Sans',sans-serif]">S</div>
      <div className="absolute left-[1041px] -top-[26px] w-[45px] h-[45px] rounded-full bg-[#3ab54a] border-[2px] border-[#e8e8e8] shadow-[0_2px_4px_rgba(0,0,0,0.4)] flex items-end justify-center pb-[2px] text-white text-[12px] font-bold leading-[14px]">67</div>
    </div>
  );
}
